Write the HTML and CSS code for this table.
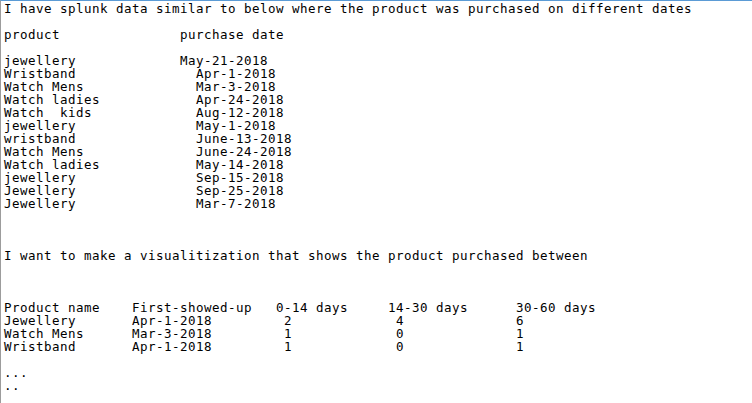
FILE: index.html
```html
<!DOCTYPE html>
<html lang="en">
<head>
<meta charset="utf-8">
<title>Splunk data question</title>
<link rel="stylesheet" href="styles.css">
</head>
<body>
<main class="frame">
<pre class="text">I have splunk data similar to below where the product was purchased on different dates

product               purchase date

jewellery             May-21-2018
Wristband               Apr-1-2018
Watch Mens              Mar-3-2018
Watch ladies            Apr-24-2018
Watch  kids             Aug-12-2018
jewellery               May-1-2018
wristband               June-13-2018
Watch Mens              June-24-2018
Watch ladies            May-14-2018
jewellery               Sep-15-2018
Jewellery               Sep-25-2018
Jewellery               Mar-7-2018



I want to make a visualitization that shows the product purchased between



Product name    First-showed-up   0-14 days     14-30 days      30-60 days
Jewellery       Apr-1-2018         2             4              6
Watch Mens      Mar-3-2018         1             0              1
Wristband       Apr-1-2018         1             0              1

...
..</pre>
</main>
</body>
</html>
```

FILE: styles.css
```css
html, body {
  margin: 0;
  padding: 0;
  background: #ffffff;
}

.frame {
  box-sizing: border-box;
  width: 752px;
  height: 403px;
  border-top: 1px solid #5b9bd5;
  border-left: 1px solid #9c9c9c;
  padding: 1px 0 0 3px;
  overflow: hidden;
}

.text {
  margin: 0;
  font-family: "DejaVu Sans Mono", "Liberation Mono", monospace;
  font-size: 12.5px;
  letter-spacing: 0.474px;
  line-height: 13px;
  color: #000000;
  white-space: pre;
}
```
